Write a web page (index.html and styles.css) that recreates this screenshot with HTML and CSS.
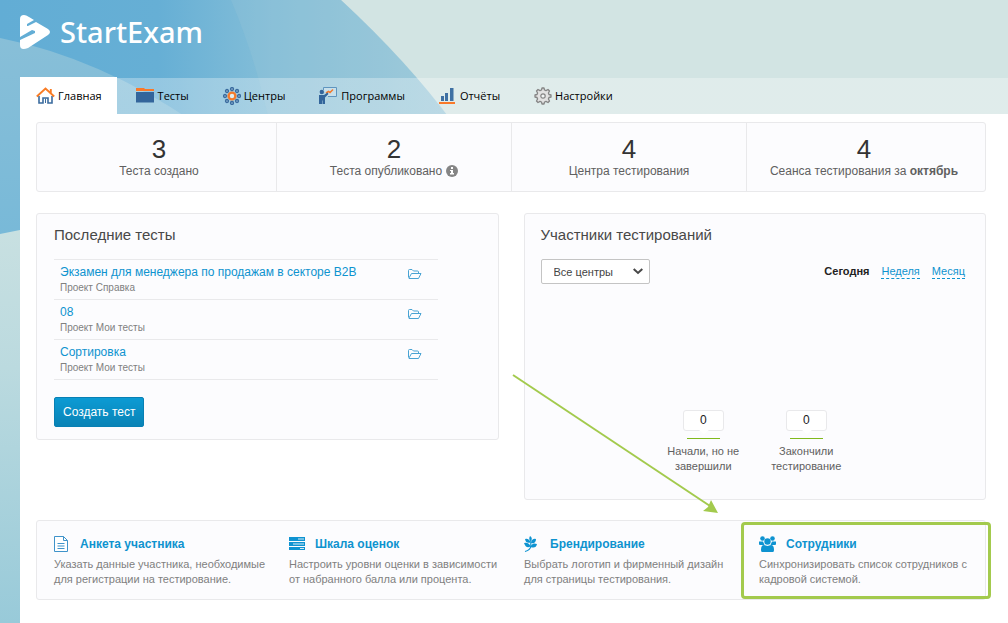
FILE: index.html
```html
<!DOCTYPE html>
<html lang="ru">
<head>
<meta charset="utf-8">
<title>StartExam</title>
<link rel="stylesheet" href="styles.css">
</head>
<body>
<svg class="backdrop" width="1008" height="623" viewBox="0 0 1008 623" aria-hidden="true">
  <defs>
    <linearGradient id="sky" x1="0" y1="0" x2="1" y2="0">
      <stop offset="0" stop-color="#62add5"/><stop offset=".35" stop-color="#66afd5"/><stop offset=".6" stop-color="#84bed8"/><stop offset="1" stop-color="#a0cbdb"/>
    </linearGradient>
    <linearGradient id="low" x1="0" y1="0" x2="0" y2="1">
      <stop offset="0" stop-color="#c8e0e1"/><stop offset=".35" stop-color="#bbdadf"/><stop offset="1" stop-color="#98cad9"/>
    </linearGradient>
    <linearGradient id="haze" x1="0" y1="0" x2="0" y2="1">
      <stop offset="0" stop-color="#88bfd8"/><stop offset="1" stop-color="#78b9d8"/>
    </linearGradient>
  </defs>
  <path fill="url(#sky)" d="M0 0H341Q408 62 453 123V240H0z"/>
  <path fill="#9cc8d8" fill-opacity=".25" d="M231 0Q248 40 260 84L270 123H453Q408 62 341 0z"/>
  <path fill="url(#haze)" d="M0 38Q100 58 195 123V240H0z"/>
  <path fill="url(#low)" d="M0 234L20 230V623H0z"/>
</svg>
<div class="page">
  <header class="header">
    <a class="logo" href="#">
      <svg class="logo-mark" width="31" height="35" viewBox="0 0 31 35" aria-hidden="true">
        <path fill="#fff" d="M0 4Q0 0 4 0Q6 0 9 2L14 5L7 9V11L8 11L16 7L28 14Q32 17 28 20L8 33Q0 36 0 30V25L15 18V16L12 15L0 22z"/>
      </svg>
      <span>StartExam</span>
    </a>
  </header>
  <nav class="nav">
    <a class="tab tab-active" href="#">
      <svg width="19" height="18" viewBox="0 0 19 18" aria-hidden="true">
        <path fill="#fff" stroke="#3b6c9f" stroke-width="1.6" d="M3 9V16H7V11H12V16H16V9"/>
        <path fill="none" stroke="#3b6c9f" d="M9.500 11.500V16"/>
        <path fill="none" stroke="#f97c24" stroke-width="1.900" d="M.8 9.500L9.500 1.500L18.200 9.500M14.800 2V6"/>
      </svg>Главная</a>
    <a class="tab" href="#">
      <svg width="19" height="18" viewBox="0 0 19 18" aria-hidden="true">
        <path fill="#f9792a" d="M0 1H8L9 2H18V4H0z"/><path fill="#33659b" d="M0 5H18V15.500H0z"/>
      </svg>Тесты</a>
    <a class="tab" href="#">
      <svg width="18" height="18" viewBox="0 0 18 18" aria-hidden="true">
        <circle cx="9" cy="9" r="3.400" fill="#e3eef0" stroke="#f47a2c" stroke-width="2.400"/>
        <g fill="#8fb3d0" stroke="#3b6c9f" stroke-width="1.300">
          <circle cx="9" cy="2" r="1.500"/><circle cx="14" cy="4" r="1.500"/><circle cx="16" cy="9" r="1.500"/><circle cx="14" cy="14" r="1.500"/>
          <circle cx="9" cy="16" r="1.500"/><circle cx="4" cy="14" r="1.500"/><circle cx="2" cy="9" r="1.500"/><circle cx="4" cy="4" r="1.500"/>
        </g>
      </svg>Центры</a>
    <a class="tab" href="#">
      <svg width="19" height="18" viewBox="0 0 19 18" aria-hidden="true">
        <path fill="#d7e8f0" fill-opacity=".6" stroke="#5f95bf" d="M4.500 3V.5H17.500V9.500H9"/>
        <path fill="none" stroke="#f47a2c" stroke-width="1.500" d="M7 6L9.500 4.500L11 5.500L14 2.500"/>
        <circle cx="2.800" cy="5" r="2.200" fill="#33659b"/>
        <path fill="#33659b" d="M0 8H5L8.500 5.500L9.500 7L6 10.500V17H3.500V13.500H3V17H0z"/>
      </svg>Программы</a>
    <a class="tab" href="#">
      <svg width="18" height="18" viewBox="0 0 18 18" aria-hidden="true">
        <path fill="#3f70a3" d="M2 9H5V14H2zM6 6H9V14H6zM11 1H14.500V14H11z"/><path fill="#f9792a" d="M0 15H16V17H0z"/>
      </svg>Отчёты</a>
    <a class="tab" href="#">
      <svg width="18" height="18" viewBox="0 0 18 18" aria-hidden="true">
        <path fill="#e2e2e2" stroke="#858585" stroke-width="1.300" stroke-linejoin="round" d="M7.500 3L8 1H10L10.500 3L12 3.600L14 2.500L15.500 4L14.400 6L15 7.500L17 8V10L15 10.500L14.400 12L15.500 14L14 15.500L12 14.400L10.500 15L10 17H8L7.500 15L6 14.400L4 15.500L2.500 14L3.600 12L3 10.500L1 10V8L3 7.500L3.600 6L2.500 4L4 2.500L6 3.600z"/>
        <circle cx="9" cy="9" r="2.200" fill="#f2f5f5" stroke="#858585" stroke-width="1.200"/>
      </svg>Настройки</a>
  </nav>
  <main class="main">
    <section class="card stats">
      <div class="stat"><strong class="stat-value">3</strong><span>Теста создано</span></div>
      <div class="stat"><strong class="stat-value">2</strong><span class="stat-label">Теста опубликовано
        <svg width="12" height="12" viewBox="0 0 12 12" aria-hidden="true"><circle cx="6" cy="6" r="6" fill="#858585"/><path fill="#fff" d="M5 2H7V4H5zM4 5H7V8H8V9.500H4V8H5V6H4z"/></svg></span></div>
      <div class="stat"><strong class="stat-value">4</strong><span>Центра тестирования</span></div>
      <div class="stat"><strong class="stat-value">4</strong><span>Сеанса тестирования за <b>октябрь</b></span></div>
    </section>
    <div class="panels">
      <section class="card panel">
        <h2 class="panel-title">Последние тесты</h2>
        <ul class="tests">
          <li class="test"><div><a class="test-link" href="#">Экзамен для менеджера по продажам в секторе B2B</a><span class="test-project">Проект Справка</span></div>
            <a class="folder" href="#" aria-label="Открыть"><svg width="14" height="10" viewBox="0 0 14 10"><path d="M.5 8.500V1.500Q.5 .5 1.500 .5H4L5.500 2H9.500Q10.500 2 10.500 3V4.500M.8 9.300L3.500 4.500H13L10.500 9.500H1"/></svg></a></li>
          <li class="test"><div><a class="test-link" href="#">08</a><span class="test-project">Проект Мои тесты</span></div>
            <a class="folder" href="#" aria-label="Открыть"><svg width="14" height="10" viewBox="0 0 14 10"><path d="M.5 8.500V1.500Q.5 .5 1.500 .5H4L5.500 2H9.500Q10.500 2 10.500 3V4.500M.8 9.300L3.500 4.500H13L10.500 9.500H1"/></svg></a></li>
          <li class="test"><div><a class="test-link" href="#">Сортировка</a><span class="test-project">Проект Мои тесты</span></div>
            <a class="folder" href="#" aria-label="Открыть"><svg width="14" height="10" viewBox="0 0 14 10"><path d="M.5 8.500V1.500Q.5 .5 1.500 .5H4L5.500 2H9.500Q10.500 2 10.500 3V4.500M.8 9.300L3.500 4.500H13L10.500 9.500H1"/></svg></a></li>
        </ul>
        <button class="create" type="button">Создать тест</button>
      </section>
      <section class="card panel panel-people">
        <h2 class="panel-title">Участники тестирований</h2>
        <div class="filters">
          <div class="picker">
            <select class="select" aria-label="Центр"><option>Все центры</option></select>
            <svg class="chevron" width="10" height="7" viewBox="0 0 10 7" aria-hidden="true"><path fill="none" stroke="#484848" stroke-width="2" d="M.7 1L5 5L9.300 1"/></svg>
          </div>
          <div class="periods"><b>Сегодня</b><a class="period" href="#">Неделя</a><a class="period" href="#">Месяц</a></div>
        </div>
        <div class="counters">
          <div class="counter"><span class="bubble">0</span><span class="bar"></span><span>Начали, но не завершили</span></div>
          <div class="counter"><span class="bubble">0</span><span class="bar"></span><span>Закончили тестирование</span></div>
        </div>
        <svg class="arrow" width="210" height="142" viewBox="0 0 210 142" aria-hidden="true">
          <path stroke="#a3ca4d" stroke-width="2" d="M1 1L198 132"/><path fill="#a3ca4d" d="M206 139L191 137L196 133L199 126z"/>
        </svg>
      </section>
    </div>
    <section class="card links">
      <div class="feature">
        <h3 class="feature-head"><svg width="16" height="17" viewBox="0 0 16 17" aria-hidden="true"><path fill="#fff" stroke="#3f93ca" d="M.5 .5H9.500L13.500 4.500V15.500H.5z"/><path fill="none" stroke="#3f93ca" d="M9.500 .5V4.500H13.500M3.500 7.500H10.500M3.500 10H10.500M3.500 12.500H10.500"/></svg><a href="#">Анкета участника</a></h3>
        <p class="feature-text">Указать данные участника, необходимые для регистрации на тестирование.</p>
      </div>
      <div class="feature">
        <h3 class="feature-head"><svg width="16" height="17" viewBox="0 0 16 17" aria-hidden="true"><path fill="#0e93d1" d="M0 1H16V5H0zM0 6H16V10H0zM0 11H16V14H0z"/><path stroke="#d8edf7" d="M9 3H15M4 8H15M11 12.500H15"/></svg><a href="#">Шкала оценок</a></h3>
        <p class="feature-text">Настроить уровни оценки в зависимости от набранного балла или процента.</p>
      </div>
      <div class="feature">
        <h3 class="feature-head"><svg width="16" height="17" viewBox="0 0 16 17" aria-hidden="true"><path fill="#0e93d1" d="M6 0Q9 2 7 5Q4 4 6 0zM1 3Q5 2 6.500 6.500Q2 8 1 3zM12 3Q12 8 7 7Q8 2 12 3zM0 7Q5 6 6.500 10.500Q2 13 0 7zM13 8Q12 13 6.500 11Q8 6 13 8z"/><path fill="none" stroke="#0e93d1" stroke-width="1.200" d="M6.800 4V10Q6.500 14 1 15.500"/></svg><a href="#">Брендирование</a></h3>
        <p class="feature-text">Выбрать логотип и фирменный дизайн для страницы тестирования.</p>
      </div>
      <div class="feature feature-marked">
        <h3 class="feature-head"><svg width="17" height="17" viewBox="0 0 17 17" aria-hidden="true"><g fill="#0e93d1"><circle cx="3.500" cy="2.500" r="2.300"/><circle cx="13.500" cy="2.500" r="2.300"/><circle cx="8.500" cy="5.500" r="3.200"/><path d="M0 5.500H4L5.500 9H1Q0 9 0 8zM17 5.500H13L11.500 9H16Q17 9 17 8zM3 16Q2 16 2 14Q2 9 5 9L8.500 10L12 9Q15 9 15 14Q15 16 14 16z"/></g></svg><a href="#">Сотрудники</a></h3>
        <p class="feature-text">Синхронизировать список сотрудников с кадровой системой.</p>
      </div>
    </section>
  </main>
</div>
</body>
</html>
```
FILE: styles.css
```css
* { box-sizing: border-box; }
body {
  margin: 0;
  position: relative;
  min-height: 100vh;
  background: #d2e4e3;
  font-family: "Liberation Sans", Arial, sans-serif;
  font-size: 12px;
  line-height: 16px;
  color: #606060;
}
a { color: #0e93cf; text-decoration: none; }
svg { flex: none; }
.backdrop { position: absolute; left: 0; top: 0; }
.page {
  position: relative;
  display: flex;
  flex-direction: column;
  min-height: 100vh;
  padding-left: 20px;
}
.header { height: 77px; padding-top: 14px; }
.logo {
  display: inline-flex;
  align-items: center;
  gap: 9px;
  height: 36px;
  color: #fff;
  font: 500 29px/36px "Noto Sans", sans-serif;
}
.nav {
  display: flex;
  gap: 3px;
  height: 37px;
  background: linear-gradient(transparent 1px, rgba(255, 255, 255, .3) 1px);
}
.tab {
  display: flex;
  align-items: center;
  gap: 3px;
  padding: 0 15px 0 16px;
  color: #000;
  font: 11px/16px "Open Sans", "Noto Sans", sans-serif;
}
.tab-active { background: #fff; }
.main { flex: 1; padding: 8px 22px 23px 16px; background: #fff; }
.card { border: 1px solid #e9e9eb; border-radius: 3px; background: #fcfcfe; }
.stats { display: flex; padding: 0 4px 0 5px; }
.stat {
  flex: 1;
  display: flex;
  flex-direction: column;
  align-items: center;
  padding: 12px 0;
  border-right: 1px solid #e9e9eb;
}
.stat:last-child { border-right: 0; }
.stat-value { color: #333; font-size: 26px; font-weight: 400; line-height: 28px; }
.stat-label { display: flex; align-items: center; gap: 4px; }
.panels {
  display: grid;
  grid-template-columns: 1fr 1fr;
  align-items: start;
  gap: 25px;
  margin: 21px 0 20px;
}
.panel { padding: 11px 17px 12px; }
.panel-title { margin: 0; color: #484848; font-size: 15px; font-weight: 400; line-height: 20px; }
.tests { width: 90%; margin: 14px 0 17px; padding: 0; list-style: none; border-top: 1px solid #e9e9eb; }
.test {
  display: flex;
  justify-content: space-between;
  height: 40px;
  padding: 4px 16px 0 6px;
  border-bottom: 1px solid #e9e9eb;
}
.test-link { display: block; }
.test-project { display: block; color: #808080; font-size: 10px; }
.folder { padding-top: 5px; line-height: 0; }
.folder path { fill: none; stroke: #49a3d3; }
.create {
  display: block;
  height: 30px;
  padding: 0 8px;
  border: 1px solid #0880b4;
  border-radius: 2px;
  background: linear-gradient(#0c9bd4, #0983b6);
  color: #fff;
  font: 12px/16px "Liberation Sans", Arial, sans-serif;
}
.panel-people { position: relative; padding: 11px 16px 25px; }
.filters { display: flex; justify-content: space-between; margin-top: 14px; }
.picker { position: relative; }
.select {
  display: block;
  width: 109px;
  height: 25px;
  padding: 0 12px;
  appearance: none;
  border: 1px solid #c4c4c4;
  border-radius: 2px;
  background: #fff;
  color: #444;
  font: 11px/16px "Liberation Sans", Arial, sans-serif;
}
.chevron { position: absolute; right: 7px; top: 9px; pointer-events: none; }
.periods {
  display: flex;
  align-items: flex-start;
  gap: 12px;
  padding: 5px 4px 0 0;
  color: #222;
  font-size: 11px;
  line-height: 14px;
}
.period { border-bottom: 1px dashed #0e93cf; }
.counters { display: flex; justify-content: center; margin-top: 126px; }
.counter {
  display: flex;
  flex-direction: column;
  align-items: center;
  width: 103px;
  padding: 0 12px;
  font-size: 11px;
  line-height: 15px;
  text-align: center;
}
.bubble {
  position: relative;
  width: 41px;
  height: 21px;
  border: 1px solid #e9e9eb;
  border-radius: 3px;
  background: #fff;
  color: #222;
  font-size: 12px;
  line-height: 19px;
}
.bubble::after {
  content: "";
  position: absolute;
  left: 15px;
  top: 19px;
  border: 5px solid transparent;
  border-top: 4px solid #fff;
}
.bar { width: 33px; height: 1px; margin: 7px 0 5px; background: #80b91c; }
.arrow { position: absolute; left: -13px; top: 160px; pointer-events: none; }
.links { display: flex; padding: 0 4px; }
.feature { flex: 1; min-width: 0; padding: 14px 8px 12px 13px; }
.feature-head { display: flex; align-items: center; gap: 10px; margin: 0; font-size: 12px; line-height: 19px; }
.feature-text { margin: 3px 0 0; color: #808080; font-size: 11px; line-height: 15px; }
.feature-marked { position: relative; }
.feature-marked::after {
  content: "";
  position: absolute;
  inset: 1px -10px 0 -5px;
  border: 3px solid #a3ca4d;
  border-radius: 4px;
  pointer-events: none;
}
```
